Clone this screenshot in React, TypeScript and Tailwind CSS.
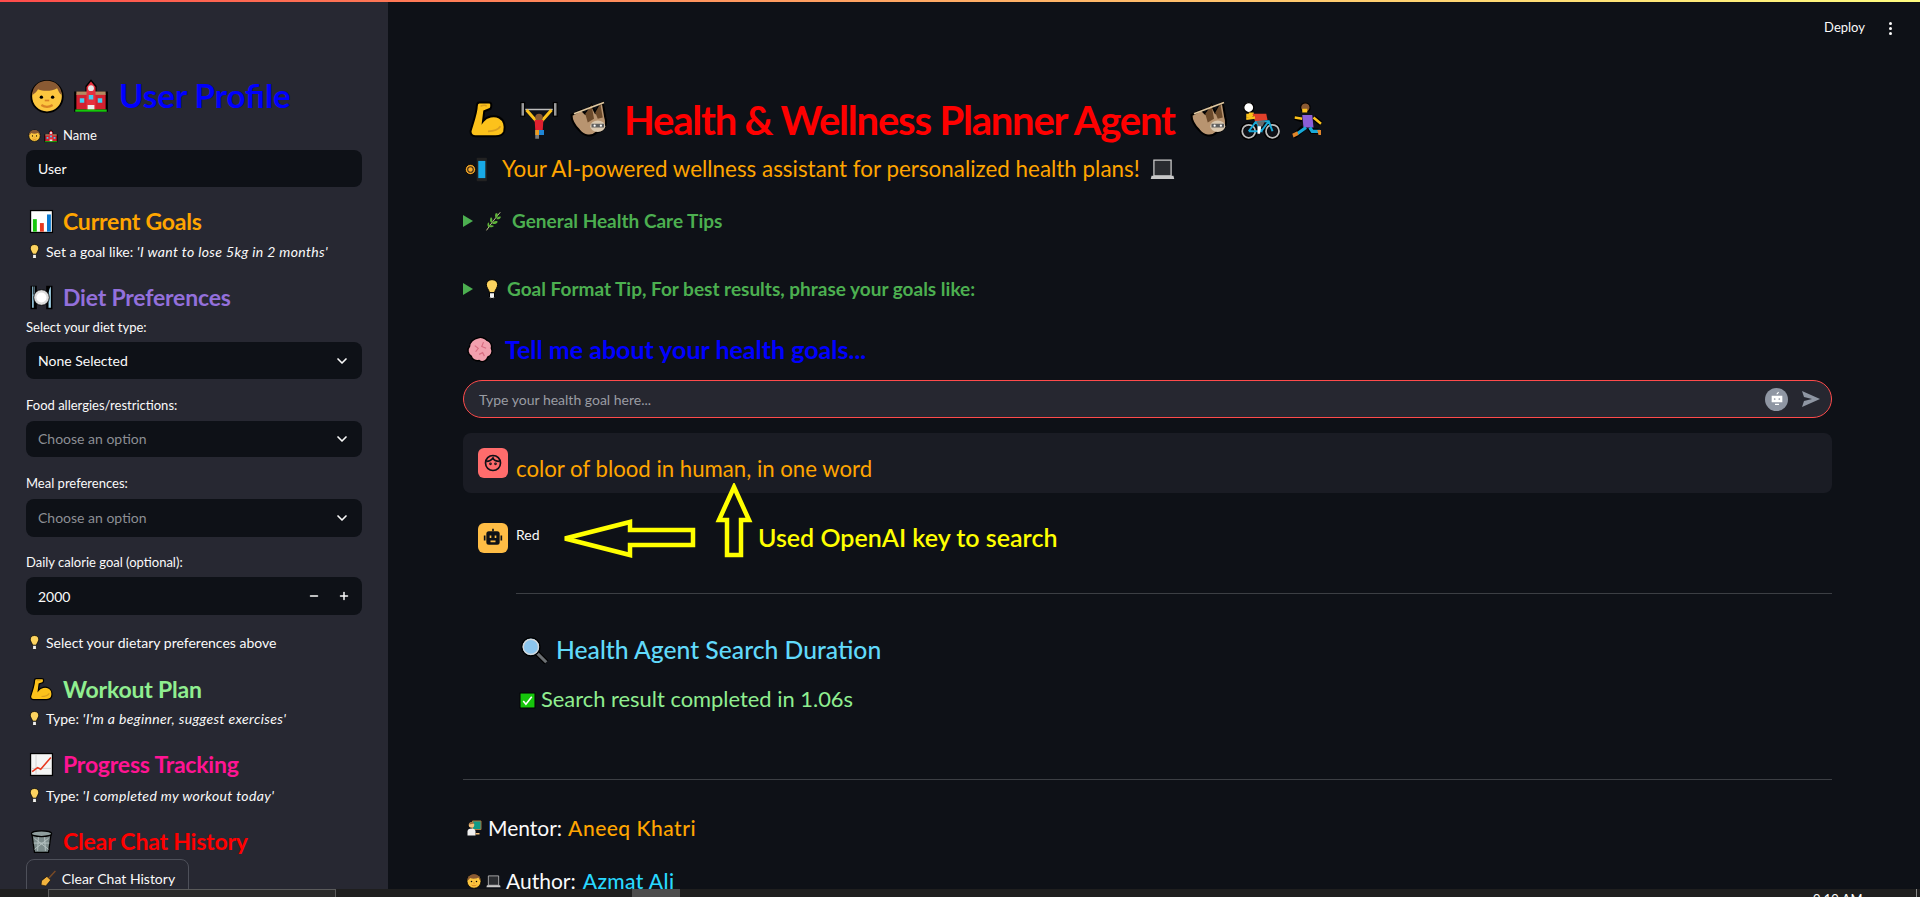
import type { ReactNode } from "react";
import { ChevronDown, Minus, Plus } from "lucide-react";

const O = { stroke: "#000", strokeWidth: 1.6 };

const emojis: Record<string, ReactNode> = {
  boy: (
    <>
      <circle cx="16" cy="16.5" r="14" fill="#fcc63f" {...O} />
      <path d="M3 15C3 7 9 2.5 16 2.5S29 7 29 15c-2-1-3-4-4-6-5 3-12 3-17 1-1 2-3 4-5 5z" fill="#8a5a33" />
      <circle cx="11" cy="17" r="1.5" fill="#000" />
      <circle cx="21" cy="17" r="1.5" fill="#000" />
      <path d="M14 20h4" stroke="#d98324" strokeWidth="1.5" />
      <path d="M11 24c3 2 7 2 10 0" stroke="#d98324" strokeWidth="2" fill="none" />
    </>
  ),
  school: (
    <>
      <path d="M16 1l5 6v5h10v18H1V12h10V7z" fill="#000" />
      <path d="M3 14h26v14H3z" fill="#d3202f" />
      <path d="M3 12h26v3H3z" fill="#b58a5f" />
      <path d="M12 8l4-5 4 5v20h-8z" fill="#e5303e" />
      <circle cx="16" cy="9" r="2.6" fill="#e8e8e8" />
      <path d="M6 18h4v4H6zM22 18h4v4h-4zM14 15h4v4h-4z" fill="#3fd0f5" />
      <path d="M13 24h6v4h-6z" fill="#eee" />
      <path d="M2 28h28v2H2z" fill="#16c60c" />
    </>
  ),
  chart: (
    <>
      <rect x="2" y="2" width="28" height="28" fill="#fff" {...O} />
      <path d="M5 13h5v16H5z" fill="#16c60c" />
      <path d="M14 18h5v11h-5z" fill="#e8391f" />
      <path d="M23 7h5v22h-5z" fill="#0b7ad1" />
    </>
  ),
  chartUp: (
    <>
      <rect x="2" y="2" width="28" height="28" fill="#f5f5f5" {...O} />
      <path d="M9 4v24M3 21h26" stroke="#ccc" strokeWidth="1" />
      <path d="M4 25l7-5 4 2 13-15" stroke="#e8391f" strokeWidth="2" fill="none" />
    </>
  ),
  bulb: (
    <>
      <path d="M16 1c6 0 9 4 9 8 0 5-4 8-5 13h-8c-1-5-5-8-5-13 0-4 3-8 9-8z" fill="#fcd35f" {...O} />
      <path d="M12 22h8v7l-2 2h-4l-2-2z" fill="#f2f2f2" {...O} />
    </>
  ),
  plate: (
    <>
      <path d="M2 1h8v30H2z" fill="#000" />
      <path d="M4 2h1v10h1V2h1v10l-1 2v15H4z" fill="#9fd3ea" />
      <path d="M22 1h8v30h-8z" fill="#000" />
      <path d="M28 2v27h-3V14c0-5 1-10 3-12z" fill="#9fd3ea" />
      <circle cx="16" cy="16" r="10" fill="#dcdcdc" stroke="#000" strokeWidth="1" />
      <circle cx="16" cy="16" r="6.5" fill="#fff" />
    </>
  ),
  muscle: (
    <>
      <path d="M9 2h8c2 0 2 3 1 5l-5 2-1 8c3-4 9-5 13-3s5 7 4 11c-1 3-4 4-7 4H6c-3 0-4-2-4-4C4 18 7 10 7 5c0-2 1-3 2-3z" fill="#fcc21b" {...O} />
      <path d="M16 25c4 0 8-1 10-4" stroke="#d99e1e" strokeWidth="1.4" fill="none" />
      <path d="M10 5c2-1 4-1 5 0" stroke="#d99e1e" strokeWidth="1.2" fill="none" />
    </>
  ),
  lifter: (
    <>
      <path d="M3 7.5h26" stroke="#bdbdbd" strokeWidth="1.2" />
      <rect x="1.5" y="2" width="3" height="11" fill="#9a9a9a" stroke="#000" strokeWidth="1" />
      <rect x="27.5" y="2" width="3" height="11" fill="#9a9a9a" stroke="#000" strokeWidth="1" />
      <path d="M6 8l8 9M26 8l-8 9" stroke="#fcc21b" strokeWidth="2.4" />
      <circle cx="16" cy="14" r="3" fill="#8a5a33" />
      <path d="M12.5 16h7l-.5 8h-6z" fill="#e0202f" />
      <path d="M13 24h7v4h-7z" fill="#1f86d6" />
      <path d="M13 24h3v4h-3z" fill="#f09a1c" />
      <path d="M13 28h3v3h-3z" fill="#7a7a7a" />
    </>
  ),
  sloth: (
    <>
      <path d="M2 12l8-4 3 3 5-7 3 6 4-7 2-1 2 12c2 6-1 11-7 12-4 4-10 3-14-2-4-4-6-8-6-12z" fill="#b89470" {...O} />
      <path d="M13 11l5-7 2 11-5 3zM21 10l4-7 2 11-4 1z" fill="#6b4a2b" />
      <path d="M4 11L28 2" stroke="#e0c8a0" strokeWidth="1.4" />
      <ellipse cx="23" cy="21" rx="6" ry="4.6" fill="#d9c8b0" />
      <path d="M18 19h10v3H18z" fill="#5f5f5f" />
      <circle cx="20.5" cy="20.5" r="0.9" fill="#fff" />
      <circle cx="25.5" cy="20.5" r="0.9" fill="#fff" />
    </>
  ),
  cyclist: (
    <>
      <circle cx="7" cy="25" r="5.6" fill="none" stroke="#000" strokeWidth="3" />
      <circle cx="7" cy="25" r="5.2" fill="none" stroke="#bdbdbd" strokeWidth="1.4" />
      <circle cx="26" cy="25" r="5.6" fill="none" stroke="#000" strokeWidth="3" />
      <circle cx="26" cy="25" r="5.2" fill="none" stroke="#bdbdbd" strokeWidth="1.4" />
      <path d="M7 25l6-8h10l3 8M13 17l4 8h-10M23 17l-6 8" stroke="#18a9d8" strokeWidth="1.6" fill="none" />
      <path d="M5 11h5v3H5z" fill="#fcc21b" />
      <circle cx="7" cy="6" r="4" fill="#fff" stroke="#000" strokeWidth="1" />
      <path d="M7 10h4v3H7z" fill="#fcc21b" />
      <path d="M10 11l11 0 1 5-10 1z" fill="#e0402a" />
      <path d="M13 17h7l-2 4h-3z" fill="#6a6a6a" />
      <path d="M14 21h3l-1 6h-2z" fill="#fff" />
      <path d="M5 15l7-1" stroke="#fcc21b" strokeWidth="2" />
    </>
  ),
  runner: (
    <>
      <path d="M9 16l-6-2M18 14l6 5" stroke="#000" strokeWidth="4" />
      <path d="M10 22l-5 5-3 2M15 22l2 3 5 0" stroke="#000" strokeWidth="4.5" fill="none" />
      <path d="M9 15l-6-1M18 14l6 5" stroke="#fcc21b" strokeWidth="2" />
      <circle cx="11.5" cy="6" r="3.8" fill="#8a5a33" stroke="#000" strokeWidth="1" />
      <path d="M9 7h4v3H9z" fill="#fcc21b" />
      <path d="M9 12h8l1 10h-8z" fill="#8a5fd8" />
      <path d="M12 22l-7 5M15 22l2 3 6 0" stroke="#18a9d8" strokeWidth="2.6" fill="none" />
      <path d="M1 27l4-2 1 3-4 2zM21 24l3 0v4h-2z" fill="#e0852a" />
    </>
  ),
  robotPhone: (
    <>
      <circle cx="7" cy="16" r="6.5" fill="#f7a928" stroke="#000" strokeWidth="1" />
      <circle cx="7" cy="16" r="3.6" fill="none" stroke="#33261a" strokeWidth="1.4" />
      <rect x="15" y="1" width="13" height="30" rx="1" fill="#222" />
      <path d="M17 5h9v22h-9z" fill="#18a9e6" />
    </>
  ),
  laptop: (
    <>
      <path d="M5 4h22v20H5z" fill="#2a2c30" stroke="#ccc" strokeWidth="1.6" />
      <path d="M2 24h28l1 4H1z" fill="#c8c8c8" />
    </>
  ),
  herb: (
    <>
      <path d="M4 31C10 22 16 14 26 2" stroke="#e6e4a8" strokeWidth="1.3" fill="none" />
      <path d="M19 3c4 0 4 5 1 8-3-1-3-5-1-8zM27 9c0 3-4 5-7 4 0-3 4-5 7-4zM11 10c3 1 3 6 1 9-3-2-3-6-1-9zM22 17c-1 3-6 5-9 3 1-3 6-5 9-3zM7 18c2 2 2 6 0 8-2-2-2-6 0-8zM16 24c-2 2-6 3-9 1 2-2 6-3 9-1z" fill="#5db339" />
    </>
  ),
  brain: (
    <>
      <path d="M14 2c3-1 8 0 10 3 4 1 6 5 5 9 2 4 0 9-4 10-1 4-6 7-10 4-4 1-8-1-9-5-4-2-5-8-2-11 0-5 5-9 10-10z" fill="#f2a0ae" {...O} />
      <path d="M10 11l4 3-3 4M20 7l-2 5 5 2M15 21l4-2 2 4" stroke="#d86c80" strokeWidth="1.3" fill="none" />
    </>
  ),
  magnifier: (
    <>
      <path d="M18 18l11 11" stroke="#000" strokeWidth="6" />
      <path d="M18 18l11 11" stroke="#6b6f73" strokeWidth="3.4" />
      <circle cx="12" cy="12" r="10" fill="#8cc6ee" stroke="#000" strokeWidth="1.6" />
      <circle cx="12" cy="12" r="8.4" fill="#8cc6ee" stroke="#d8d8d8" strokeWidth="1.4" />
    </>
  ),
  check: (
    <>
      <rect x="2" y="2" width="28" height="28" fill="#16c60c" {...O} />
      <path d="M8 17l5 6 11-14" stroke="#fff" strokeWidth="3" fill="none" />
    </>
  ),
  teacher: (
    <>
      <path d="M13 2h17v17H13z" fill="#0f9a86" stroke="#a5793e" strokeWidth="2" />
      <circle cx="11" cy="10" r="5.5" fill="#f4c27d" />
      <path d="M6 9c0-5 9-6 11-2-3 1-8 1-11 2z" fill="#9a6a3c" />
      <path d="M3 31v-8c0-4 3-6 8-6s8 2 8 6v8z" fill="#f1f1f1" />
      <path d="M19 26h8v3h-8z" fill="#f4c27d" />
    </>
  ),
  trash: (
    <>
      <path d="M4 8h24l-3 22H7z" fill="#7d8c8c" {...O} />
      <path d="M7 12l18 14M25 12L7 26M12 10l-1 18M20 10l1 18M6 18h20" stroke="#b8c4c4" strokeWidth="1.2" />
      <ellipse cx="16" cy="6" rx="13" ry="3.6" fill="#8f9e9e" {...O} />
    </>
  ),
  broom: (
    <>
      <path d="M29 2L15 17" stroke="#7a4a25" strokeWidth="2.6" />
      <path d="M13 12l7 7-9 11-9-2 1-8z" fill="#f2b33d" stroke="#000" strokeWidth="1" />
    </>
  ),
};

function Emoji({ name, size, className = "" }: { name: string; size: number; className?: string }) {
  return (
    <svg viewBox="0 0 32 32" width={size} height={size} className={`shrink-0 ${className}`}>
      {emojis[name]}
    </svg>
  );
}

function SideHead({ icon, color, margin, children }: { icon: string; color: string; margin: string; children: ReactNode }) {
  return (
    <div className={`flex h-8 items-center gap-[9px] pl-[3px] text-[23px] font-bold tracking-[-0.2px] ${color} ${margin}`}>
      <Emoji name={icon} size={25} />
      <span>{children}</span>
    </div>
  );
}

function Tip({ margin, children }: { margin: string; children: ReactNode }) {
  return (
    <div className={`flex h-5 items-center gap-[4px] pl-[1px] text-[14px] text-[#fafafa] ${margin}`}>
      <Emoji name="bulb" size={15} />
      <span>{children}</span>
    </div>
  );
}

function Label({ margin, children }: { margin: string; children: ReactNode }) {
  return <div className={`flex h-5 items-center text-[13px] text-[#fafafa] ${margin}`}>{children}</div>;
}

function SelectBox({ margin, height, value, muted }: { margin: string; height: string; value: string; muted?: boolean }) {
  return (
    <div className={`flex w-[336px] items-center justify-between rounded-lg bg-[#0e1117] pl-[12px] pr-[12px] text-[14px] ${height} ${margin} ${muted ? "text-[#8c8e94]" : "text-[#fafafa]"}`}>
      <span>{value}</span>
      <ChevronDown size={16} strokeWidth={2.5} className="text-[#fafafa]" />
    </div>
  );
}

function Sidebar() {
  return (
    <aside className="flex w-[388px] shrink-0 flex-col overflow-hidden bg-[#272832] pl-[26px] pt-[73px]">
      <div className="flex h-[42px] items-center pl-[3px] text-[33px] font-bold text-[#0000ff]">
        <Emoji name="boy" size={36} />
        <Emoji name="school" size={36} className="ml-[8px]" />
        <span className="ml-[10px]">User Profile</span>
      </div>
      <div className="mt-[9px] flex h-5 items-center pl-[2px] text-[13px] text-[#fafafa]">
        <Emoji name="boy" size={13} />
        <Emoji name="school" size={14} className="ml-[3px]" />
        <span className="ml-[5px]">Name</span>
      </div>
      <div className="mt-1 flex h-[38px] w-[336px] items-center rounded-lg bg-[#0e1117] pl-[12px] text-[14px] text-[#fafafa]">User</div>

      <SideHead icon="chart" color="text-[#ffa500]" margin="mt-[18px]">Current Goals</SideHead>
      <Tip margin="mt-1">Set a goal like: <em className="tracking-[0.35px]">'I want to lose 5kg in 2 months'</em></Tip>

      <SideHead icon="plate" color="text-[#9370db]" margin="mt-5">Diet Preferences</SideHead>
      <Label margin="mt-1">Select your diet type:</Label>
      <SelectBox margin="mt-[5px]" height="h-[37px]" value="None Selected" />
      <Label margin="mt-[17px]">Food allergies/restrictions:</Label>
      <SelectBox margin="mt-[5px]" height="h-[37px]" value="Choose an option" muted />
      <Label margin="mt-[17px]">Meal preferences:</Label>
      <SelectBox margin="mt-[5px]" height="h-[38px]" value="Choose an option" muted />
      <Label margin="mt-[16px]">Daily calorie goal (optional):</Label>
      <div className="mt-[5px] flex h-[38px] w-[336px] items-center justify-between rounded-lg bg-[#0e1117] pl-[12px] pr-[12px] text-[14px] text-[#fafafa]">
        <span>2000</span>
        <div className="flex items-center gap-[18px]">
          <Minus size={12} strokeWidth={3} />
          <Plus size={12} strokeWidth={3} />
        </div>
      </div>
      <Tip margin="mt-[17px]">Select your dietary preferences above</Tip>

      <SideHead icon="muscle" color="text-[#90ee90]" margin="mt-[21px]">Workout Plan</SideHead>
      <Tip margin="mt-[3px]">Type: <em className="tracking-[0.35px]">'I'm a beginner, suggest exercises'</em></Tip>

      <SideHead icon="chartUp" color="text-[#ff1493]" margin="mt-5">Progress Tracking</SideHead>
      <Tip margin="mt-[5px]">Type: <em className="tracking-[0.35px]">'I completed my workout today'</em></Tip>

      <SideHead icon="trash" color="text-[#ff0000]" margin="mt-5">Clear Chat History</SideHead>
      <button className="mt-[2px] flex h-[38px] w-[163px] shrink-0 items-center justify-center gap-[5px] rounded-lg border border-[#4e505a] text-[14px] text-[#fafafa]">
        <Emoji name="broom" size={17} />
        Clear Chat History
      </button>
    </aside>
  );
}

function UserAvatar() {
  return (
    <div className="flex h-[30px] w-[30px] shrink-0 items-center justify-center rounded-md bg-[#ff6c6c]">
      <svg viewBox="0 0 24 24" width="20" height="20" fill="none" stroke="#0e1117" strokeWidth="2">
        <circle cx="12" cy="12" r="9" />
        <path d="M4 10c4 0 6-1 8-4 1 3 4 4 8 4" />
        <circle cx="9" cy="13" r="0.6" />
        <circle cx="15" cy="13" r="0.6" />
      </svg>
    </div>
  );
}

function BotAvatar() {
  return (
    <div className="flex h-[30px] w-[30px] shrink-0 items-center justify-center rounded-md bg-[#ffbd45]">
      <svg viewBox="0 0 24 24" width="20" height="20" fill="#0e1117">
        <path d="M11 1h2v3h-2z" />
        <path d="M7 4h10a3 3 0 0 1 3 3v10a3 3 0 0 1-3 3H7a3 3 0 0 1-3-3V7a3 3 0 0 1 3-3zm1 5v3h2V9zm6 0v3h2V9zm-5 6v2h6v-2z" fillRule="evenodd" />
        <path d="M1 9h2v6H1zM21 9h2v6h-2z" />
      </svg>
    </div>
  );
}

function Annotation() {
  return (
    <>
      <svg viewBox="0 0 195 78" width="195" height="78" className="absolute left-[98px] top-[-40px]" fill="none" stroke="#ffff00" strokeWidth="4.5">
        <path d="M4 55.5L69 39v8h63v15H69v10z" />
        <path d="M173 4l15 33h-8v35h-14V37h-8z" />
      </svg>
      <span className="absolute left-[295px] top-[-5px] whitespace-nowrap text-[25px] font-semibold leading-[38px] text-[#ffff00]">
        Used OpenAI key to search
      </span>
    </>
  );
}

function Main() {
  return (
    <main className="flex-1 overflow-hidden bg-[#0e1117] pl-[75px] pr-[88px]">
      <header className="mr-[-60px] flex h-[52px] items-center justify-end gap-[24px] text-[13px] text-[#fafafa]">
        <span>Deploy</span>
        <div className="flex flex-col gap-[2px]">
          <i className="h-[3px] w-[3px] rounded-full bg-[#fafafa]" />
          <i className="h-[3px] w-[3px] rounded-full bg-[#fafafa]" />
          <i className="h-[3px] w-[3px] rounded-full bg-[#fafafa]" />
        </div>
      </header>

      <h1 className="mt-[38px] flex h-14 items-center pl-[5px] text-[40px] font-bold tracking-[-1.2px] text-[#ff0000]">
        <Emoji name="muscle" size={40} />
        <Emoji name="lifter" size={40} className="ml-[11px]" />
        <Emoji name="sloth" size={40} className="ml-[10px]" />
        <span className="ml-[15px]">Health &amp; Wellness Planner Agent</span>
        <Emoji name="sloth" size={40} className="ml-[14px]" />
        <Emoji name="cyclist" size={40} className="ml-[11px]" />
        <Emoji name="runner" size={40} className="ml-[11px]" />
      </h1>

      <div className="mt-[5px] flex h-8 items-center text-[22.4px] text-[#ffa500]">
        <Emoji name="robotPhone" size={25} className="ml-[2px]" />
        <span className="ml-[12px]">Your AI-powered wellness assistant for personalized health plans!</span>
        <Emoji name="laptop" size={25} className="ml-[10px]" />
      </div>

      <div className="mt-[22px] flex h-7 items-center text-[19px] font-bold text-[#4caf50]">
        <i className="ml-0 h-0 w-0 border-y-[6px] border-l-[10px] border-y-transparent border-l-[#4caf50]" />
        <Emoji name="herb" size={20} className="ml-[11px]" />
        <span className="ml-[8px]">General Health Care Tips</span>
      </div>

      <div className="mt-10 flex h-7 items-center text-[19px] font-bold text-[#4caf50]">
        <i className="ml-0 h-0 w-0 border-y-[6px] border-l-[10px] border-y-transparent border-l-[#4caf50]" />
        <Emoji name="bulb" size={20} className="ml-[9px]" />
        <span className="ml-[5px]">Goal Format Tip, For best results, phrase your goals like:</span>
      </div>

      <div className="mt-[29px] flex h-9 items-center pl-[3px] text-[25px] font-bold text-[#0000ff]">
        <Emoji name="brain" size={28} />
        <span className="ml-[11px]">Tell me about your health goals...</span>
      </div>

      <div className="mt-3 flex h-[38px] items-center justify-between rounded-full border border-[#ff4b4b] bg-[#262730] pl-[15px] pr-[11px] text-[14px] text-[#9a9ca3]">
        <span>Type your health goal here...</span>
        <div className="flex items-center gap-[14px]">
          <div className="flex h-[23px] w-[23px] items-center justify-center rounded-full bg-[#8f96a3]">
            <svg viewBox="0 0 24 24" width="16" height="16" fill="#fff">
              <path d="M12 3l2-2 1 1-2 3h-2z" />
              <path d="M4 7h16v10H4zM9 19h6v2H9z" />
              <circle cx="8.5" cy="12" r="1.3" fill="#8f96a3" />
              <circle cx="15.5" cy="12" r="1.3" fill="#8f96a3" />
            </svg>
          </div>
          <svg viewBox="0 0 18 16" width="18" height="16" fill="#8f96a3">
            <path d="M0 0l18 8-18 8 2-6 8-2-8-2z" />
          </svg>
        </div>
      </div>

      <div className="mt-[15px] flex h-[60px] items-start gap-2 rounded-lg bg-[#1a1c24] pl-[15px] pt-[15px]">
        <UserAvatar />
        <span className="mt-[6px] text-[22.2px] leading-[30px] text-[#ffa500]">color of blood in human, in one word</span>
      </div>

      <div className="relative mt-[30px] flex h-[30px] items-start gap-2 pl-[15px]">
        <BotAvatar />
        <span className="text-[14px] leading-[24px] text-[#fafafa]">Red</span>
        <Annotation />
      </div>

      <hr className="ml-[53px] mt-[40px] border-[#3c3f44]" />

      <div className="ml-[57px] mt-[38px] flex h-9 items-center text-[24.7px] font-medium text-[#61dafb]">
        <Emoji name="magnifier" size={29} />
        <span className="ml-[7px]">Health Agent Search Duration</span>
      </div>

      <div className="ml-[56px] mt-[16px] flex h-[30px] items-center text-[21.9px] text-[#90ee90]">
        <Emoji name="check" size={17} className="mt-[3px]" />
        <span className="ml-[5px]">Search result completed in 1.06s</span>
      </div>

      <hr className="mt-[65px] border-[#3c3f44]" />

      <div className="mt-[33px] flex h-[30px] items-center pl-[3px] text-[21px] text-[#fafafa]">
        <Emoji name="teacher" size={16} />
        <span className="ml-[6px]">Mentor:</span>
        <span className="ml-[6px] font-medium tracking-[0.5px] text-[#ffa500]">Aneeq Khatri</span>
      </div>

      <div className="mt-[23px] flex h-[30px] items-center pl-[3px] text-[21px] text-[#fafafa]">
        <Emoji name="boy" size={16} />
        <Emoji name="laptop" size={15} className="ml-[4px]" />
        <span className="ml-[5px]">Author:</span>
        <span className="ml-[7px] font-medium tracking-[0.4px] text-[#29d9ff]">Azmat Ali</span>
      </div>
    </main>
  );
}

function Taskbar() {
  return (
    <div className="absolute inset-x-0 bottom-0 h-2 overflow-hidden bg-[#1f1f1f]">
      <div className="absolute left-[48px] top-0 h-2 w-[288px] border-x border-t border-[#5a5a5a] bg-[#2b2b2b]" />
      <div className="absolute left-[632px] top-0 h-2 w-[48px] bg-[#4d4d4d]" />
      <span className="absolute left-[1813px] top-[4px] text-[13px] leading-none text-white">9:19 AM</span>
      <div className="absolute left-[1916px] top-0 h-2 w-px bg-[#8a8a8a]" />
    </div>
  );
}

export default function App() {
  return (
    <div className="relative flex h-[897px] w-full flex-col overflow-hidden font-[Lato,sans-serif]">
      <div className="h-[2px] shrink-0 bg-gradient-to-r from-[#ff4b4b] to-[#fffd80]" />
      <div className="flex min-h-0 flex-1">
        <Sidebar />
        <Main />
      </div>
      <Taskbar />
    </div>
  );
}
